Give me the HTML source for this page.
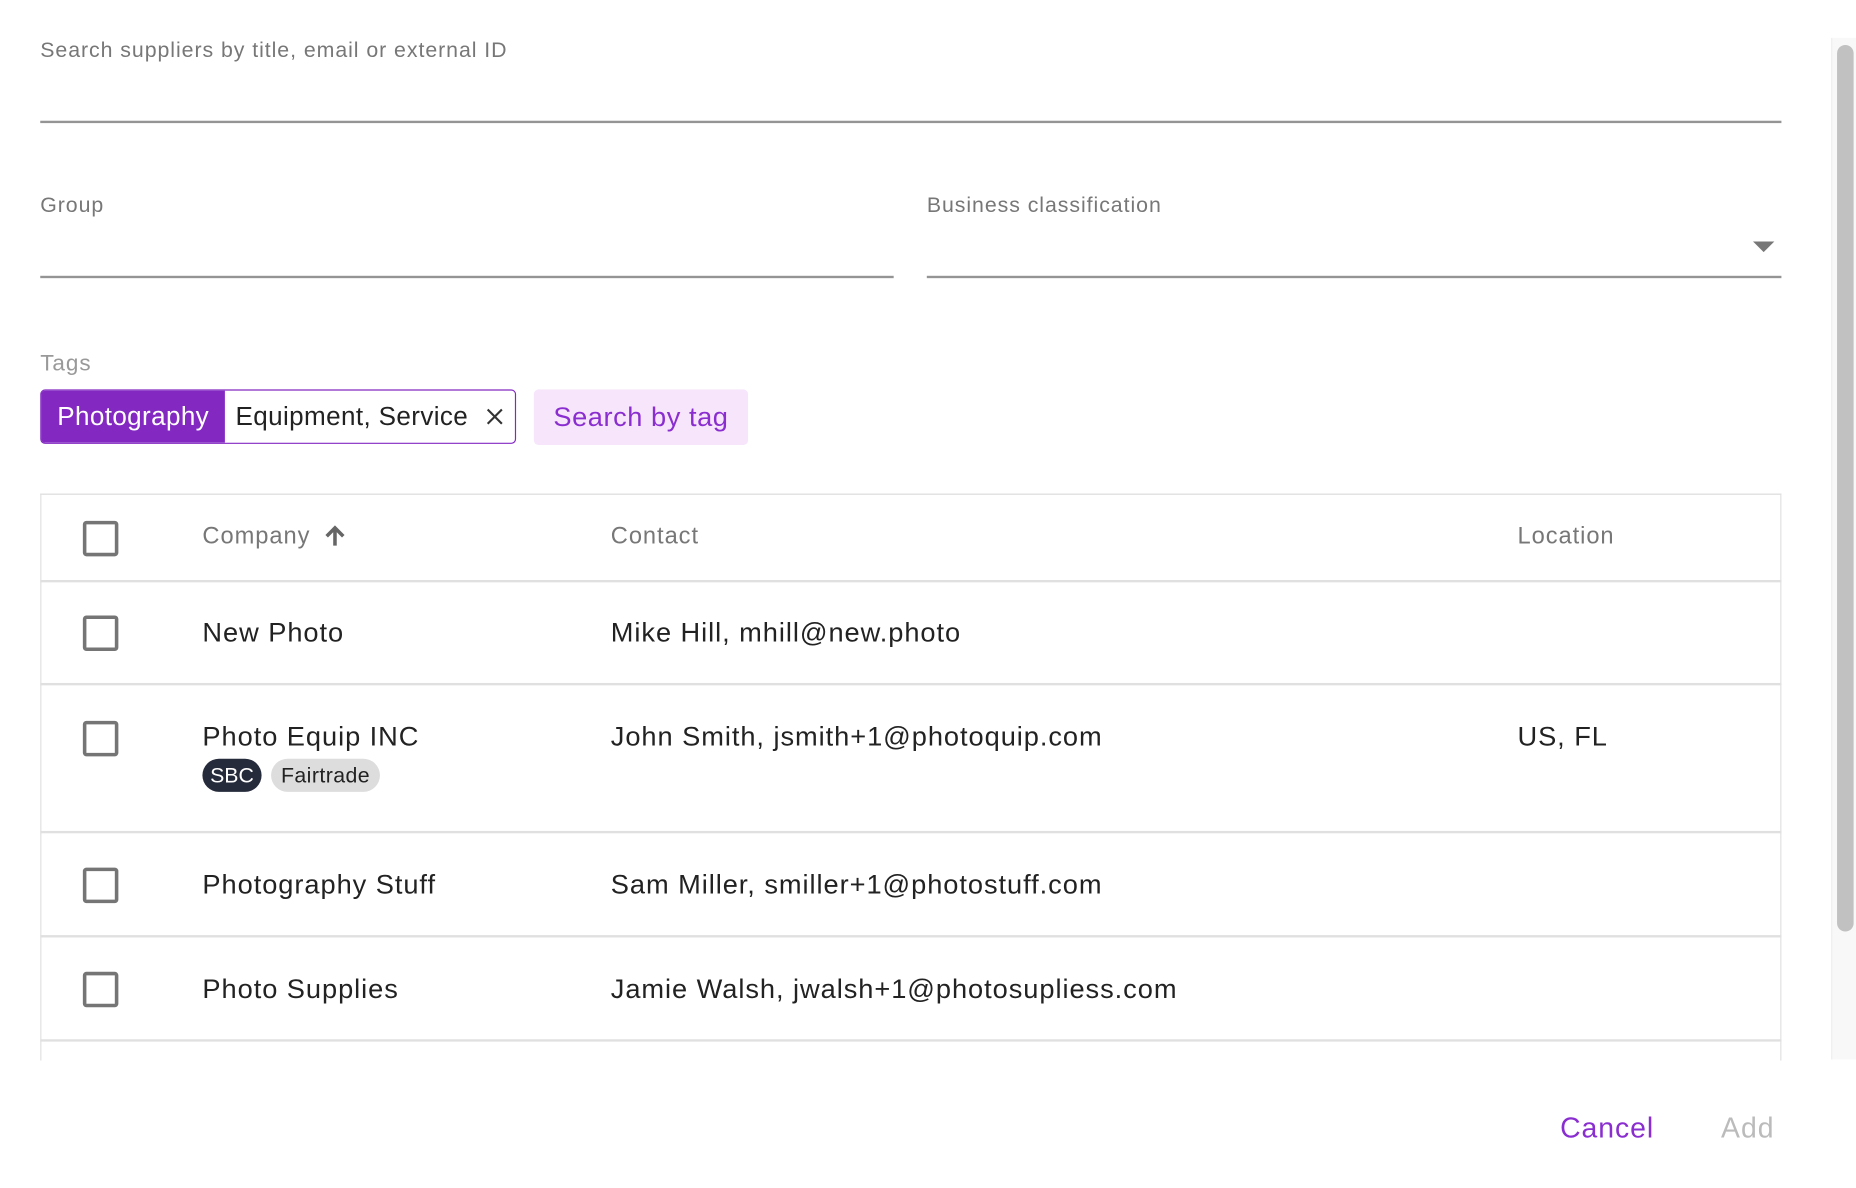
<!DOCTYPE html>
<html><head><meta charset="utf-8"><style>
html,body{margin:0;padding:0;background:#fff;width:1856px;height:1188px;overflow:hidden}
#s{position:absolute;left:0;top:0;width:1568px;height:1004px;transform:scale(1.18367);transform-origin:0 0;font-family:"Liberation Sans",sans-serif;letter-spacing:0.05em}
.a{position:absolute;white-space:nowrap}
.lbl{color:#777;font-size:18px}
.line{position:absolute;height:1.5px;background:#949494}
.cb{position:absolute;left:70px;width:24px;height:24px;border:3px solid #757575;border-radius:3px}
.h{color:#777;font-size:20px}
.t{color:#222;font-size:23px}
.row{position:absolute;left:34px;width:1471px;border-bottom:2px solid #e0e0e0}
</style></head><body><div id="s">
<div class="a lbl" style="left:34px;top:32px">Search suppliers by title, email or external ID</div>
<div class="line" style="left:34px;top:102px;width:1471px"></div>
<div class="a lbl" style="left:34px;top:163px">Group</div>
<div class="line" style="left:34px;top:233px;width:721px"></div>
<div class="a lbl" style="left:783px;top:163px">Business classification</div>
<div class="line" style="left:783px;top:233px;width:722px"></div>
<div class="a" style="left:1481px;top:204px;width:0;height:0;border-left:9px solid transparent;border-right:9px solid transparent;border-top:9px solid #777"></div>
<div class="a" style="left:34px;top:297px;color:#999;font-size:19px">Tags</div>
<div class="a" style="left:34px;top:329px;width:400px;height:44px;border:1.5px solid #8329c2;border-radius:4px;overflow:hidden;letter-spacing:0.02em">
 <div class="a" style="left:0;top:0;width:155px;height:44px;background:#8329c2;color:#fff;font-size:22px;line-height:44px;text-align:center">Photography</div>
 <div class="a" style="left:164px;top:0;line-height:44px;font-size:22px;color:#222">Equipment, Service</div>
 <svg class="a" style="left:375px;top:14px" width="16" height="16" viewBox="0 0 16 16"><path d="M2 2L14 14M14 2L2 14" stroke="#333" stroke-width="1.8"/></svg>
</div>
<div class="a" style="left:451px;top:329px;width:181px;height:47px;background:#f7e6fb;border-radius:4px;color:#8a2ed0;font-size:23px;line-height:47px;text-align:center;letter-spacing:0.02em">Search by tag</div>
<div class="a" style="left:34px;top:417px;width:1469px;height:478px;border:1px solid #e0e0e0;border-bottom:none;overflow:hidden"></div>
<div class="row" style="top:417px;height:72px;border-top:1px solid #e0e0e0"></div>
<div class="cb" style="top:440px"></div>
<div class="a h" style="left:171px;top:442px">Company</div>
<svg class="a" style="left:273px;top:443px" width="20" height="20" viewBox="0 0 20 20"><path d="M10 18V3M3 10L10 3L17 10" stroke="#666" stroke-width="3" fill="none"/></svg>
<div class="a h" style="left:516px;top:442px">Contact</div>
<div class="a h" style="left:1282px;top:442px">Location</div>
<div class="row" style="top:491px;height:86px"></div>
<div class="cb" style="top:520px"></div>
<div class="a t" style="left:171px;top:521px">New Photo</div>
<div class="a t" style="left:516px;top:521px">Mike Hill, mhill@new.photo</div>
<div class="row" style="top:579px;height:123px"></div>
<div class="cb" style="top:609px"></div>
<div class="a t" style="left:171px;top:609px">Photo Equip INC</div>
<div class="a" style="left:171px;top:641px;width:50px;height:28px;border-radius:14px;background:#262b3b;color:#fff;font-size:18px;line-height:28px;text-align:center;letter-spacing:0">SBC</div>
<div class="a" style="left:229px;top:641px;width:92px;height:28px;border-radius:14px;background:#ddd;color:#222;font-size:18px;line-height:28px;text-align:center;letter-spacing:0.02em">Fairtrade</div>
<div class="a t" style="left:516px;top:609px">John Smith, jsmith+1@photoquip.com</div>
<div class="a t" style="left:1282px;top:609px">US, FL</div>
<div class="row" style="top:704px;height:86px"></div>
<div class="cb" style="top:733px"></div>
<div class="a t" style="left:171px;top:734px">Photography Stuff</div>
<div class="a t" style="left:516px;top:734px">Sam Miller, smiller+1@photostuff.com</div>
<div class="row" style="top:792px;height:86px"></div>
<div class="cb" style="top:821px"></div>
<div class="a t" style="left:171px;top:822px">Photo Supplies</div>
<div class="a t" style="left:516px;top:822px">Jamie Walsh, jwalsh+1@photosupliess.com</div>
<div class="a" style="left:1547px;top:32px;width:21px;height:863px;background:#f8f8f8;border-left:1px solid #eee"></div>
<div class="a" style="left:1552px;top:38px;width:14px;height:749px;background:#c1c1c1;border-radius:7px"></div>
<div class="a" style="left:1318px;top:940px;color:#8a2ed0;font-size:24px">Cancel</div>
<div class="a" style="left:1454px;top:940px;color:#bbb;font-size:24px">Add</div>
</div></body></html>
